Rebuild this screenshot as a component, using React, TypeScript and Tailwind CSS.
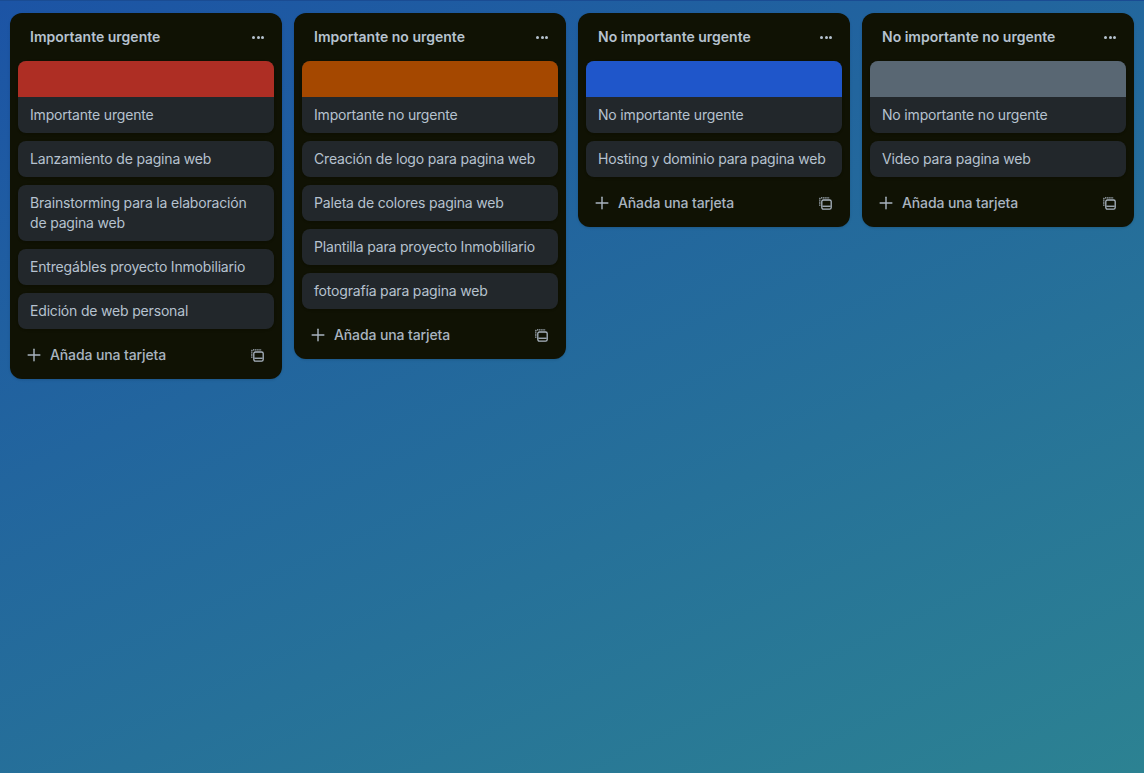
import React from "react";
import { Plus } from "lucide-react";

interface ListData {
  title: string;
  cover: string;
  cards: string[];
}

const lists: ListData[] = [
  {
    title: "Importante urgente",
    cover: "bg-[#ae2e24]",
    cards: [
      "Importante urgente",
      "Lanzamiento de pagina web",
      "Brainstorming para la elaboración de pagina web",
      "Entregábles proyecto Inmobiliario",
      "Edición de web personal",
    ],
  },
  {
    title: "Importante no urgente",
    cover: "bg-[#a54800]",
    cards: [
      "Importante no urgente",
      "Creación de logo para pagina web",
      "Paleta de colores pagina web",
      "Plantilla para proyecto Inmobiliario",
      "fotografía para pagina web",
    ],
  },
  {
    title: "No importante urgente",
    cover: "bg-[#1f56ca]",
    cards: ["No importante urgente", "Hosting y dominio para pagina web"],
  },
  {
    title: "No importante no urgente",
    cover: "bg-[#596773]",
    cards: ["No importante no urgente", "Video para pagina web"],
  },
];

const TemplateIcon = () => (
  <svg width="13" height="13" viewBox="0 0 13 13" fill="none" stroke="currentColor" strokeWidth="1.3" className="block">
    <path d="M0.8 8.8V2.2A1.4 1.4 0 0 1 2.2 0.8h8.4" strokeDasharray="1.4 0.7" />
    <rect x="2.8" y="3" width="9.4" height="9.2" rx="1.6" />
    <rect x="3.4" y="8.6" width="8.2" height="1.3" fill="currentColor" stroke="none" />
  </svg>
);

const List = ({ list }: { list: ListData }) => (
  <div className="w-[272px] shrink-0 rounded-xl bg-[#101204] px-2 shadow-sm">
    <div className="flex h-12 items-center justify-between pl-3 pr-2.5">
      <h2 className="text-sm font-semibold text-[#b6c2cf]">{list.title}</h2>
      <div className="flex w-3 justify-between">
        <span className="h-[3px] w-[3px] rounded-full bg-[#b6c2cf]" />
        <span className="h-[3px] w-[3px] rounded-full bg-[#b6c2cf]" />
        <span className="h-[3px] w-[3px] rounded-full bg-[#b6c2cf]" />
      </div>
    </div>
    <div className="flex flex-col gap-2">
      {list.cards.map((card, i) => (
        <div key={card} className="overflow-hidden rounded-lg bg-[#22272b] shadow-sm">
          {i === 0 && <div className={`h-9 ${list.cover}`} />}
          <div className="px-3 py-2 text-sm leading-5 tracking-[-0.18px] text-[#b6c2cf]">{card}</div>
        </div>
      ))}
    </div>
    <div className="flex h-[50px] items-center justify-between pl-1.5 pr-2.5 pt-0.5">
      <div className="flex items-center gap-1.5 text-sm font-medium tracking-[-0.12px] text-[#a9b4c0]">
        <Plus size={20} strokeWidth={1.7} />
        <span>Añada una tarjeta</span>
      </div>
      <span className="text-[#a9b4c0]">
        <TemplateIcon />
      </span>
    </div>
  </div>
);

export default function App() {
  return (
    <div className="h-[773px] w-[1144px] overflow-hidden border-t border-[#1a4c93] bg-[linear-gradient(155deg,#1c54a5,#2c8292)] font-['Inter',sans-serif]">
      <div className="flex items-start gap-3 pl-2.5 pt-3">
        {lists.map((list) => (
          <List key={list.title} list={list} />
        ))}
      </div>
    </div>
  );
}
